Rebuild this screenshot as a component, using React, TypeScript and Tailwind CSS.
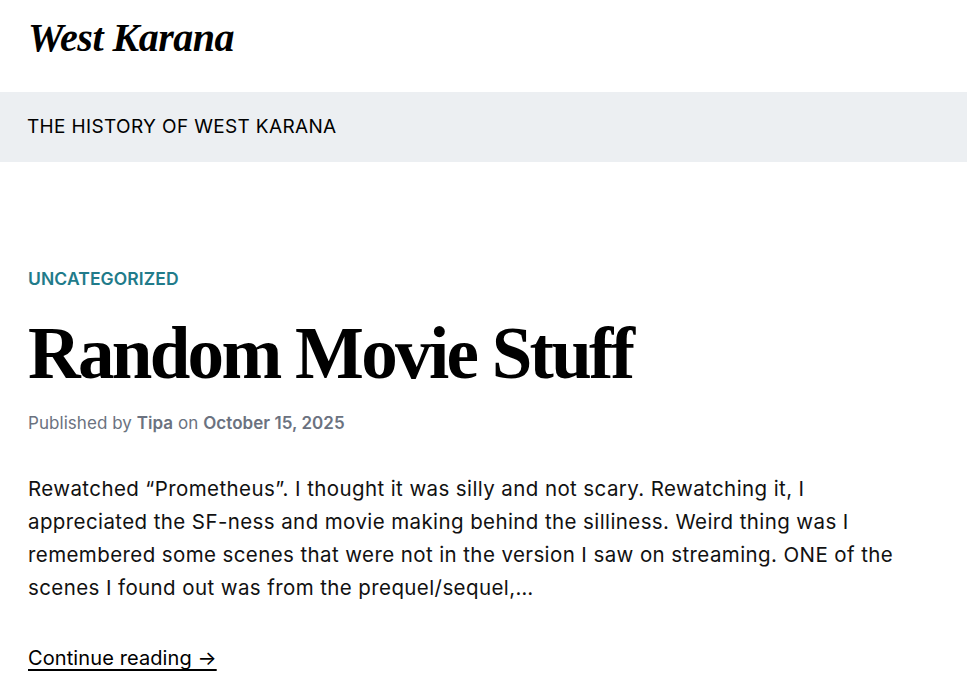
export default function App() {
  return (
    <div className="min-h-screen bg-white text-black font-['Inter',sans-serif]">
      <header className="h-[92px] px-7 pt-[14px]">
        <a href="#" className="font-['Liberation_Serif',serif] italic font-bold text-[40px] leading-[48px] tracking-[-0.5px]">
          West Karana
        </a>
      </header>

      <nav className="h-[70px] bg-[#eceff2] px-[27px] flex items-center">
        <a href="#" className="text-[19px] tracking-[0.35px]">THE HISTORY OF WEST KARANA</a>
      </nav>

      <main className="px-7 pt-[104px]">
        <a href="#" className="block text-[17.5px] font-semibold text-[#217b8a] leading-[26px] tracking-[0.1px]">
          UNCATEGORIZED
        </a>
        <h1 className="mt-[17px] font-['Liberation_Serif',serif] font-bold text-[73px] leading-[90px] tracking-[-2.7px]">
          Random Movie Stuff
        </h1>
        <p className="mt-[11px] text-[17px] text-[#6b7280] leading-[26px] tracking-[0.05px]">
          Published by <span className="font-semibold">Tipa</span> on{" "}
          <span className="font-semibold">October 15, 2025</span>
        </p>
        <p className="mt-[36px] max-w-[880px] text-[20.5px] leading-[33px] tracking-[0.4px] text-[#111]">
          Rewatched “Prometheus”. I thought it was silly and not scary. Rewatching it, I appreciated the SF-ness and
          movie making behind the silliness. Weird thing was I remembered some scenes that were not in the version I
          saw on streaming. ONE of the scenes I found out was from the prequel/sequel,…
        </p>
        <a href="#" className="inline-block mt-[39px] text-[20px] leading-[30px] underline underline-offset-[4px] tracking-[0.1px]">
          Continue reading →
        </a>
      </main>
    </div>
  );
}
